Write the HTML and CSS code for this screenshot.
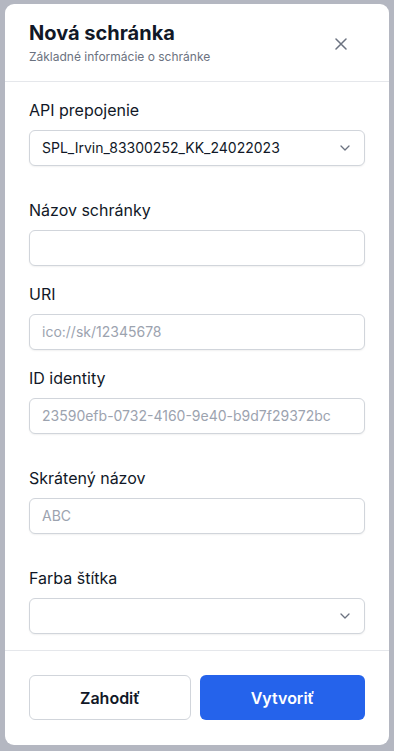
FILE: index.html
```html
<!DOCTYPE html>
<html>
<head>
  <meta charset="utf-8">
  <title>Nová schránka</title>
  <link rel="stylesheet" href="styles.css">
</head>
<body>
  <div class="backdrop">
    <div class="modal">
      <div class="modal-header">
        <div>
          <h2 class="modal-title">Nová schránka</h2>
          <p class="modal-subtitle">Základné informácie o schránke</p>
        </div>
        <button class="close-btn" aria-label="Zavrieť">
          <svg width="12" height="12" viewBox="0 0 12 12"><path d="M1 1L11 11M11 1L1 11" stroke="currentColor" stroke-width="1.5" stroke-linecap="round"/></svg>
        </button>
      </div>

      <div class="modal-body">
        <div class="field field-spaced">
          <label class="field-label">API prepojenie</label>
          <div class="select">
            <span>SPL_Irvin_83300252_KK_24022023</span>
            <svg class="chevron" width="10" height="6" viewBox="0 0 10 6"><path d="M1 1L5 5L9 1" fill="none" stroke="currentColor" stroke-width="1.3" stroke-linecap="round" stroke-linejoin="round"/></svg>
          </div>
        </div>

        <div class="field">
          <label class="field-label">Názov schránky</label>
          <div class="input"></div>
        </div>

        <div class="field">
          <label class="field-label">URI</label>
          <div class="input placeholder">ico://sk/12345678</div>
        </div>

        <div class="field field-spaced">
          <label class="field-label">ID identity</label>
          <div class="input placeholder">23590efb-0732-4160-9e40-b9d7f29372bc</div>
        </div>

        <div class="field field-spaced">
          <label class="field-label">Skrátený názov</label>
          <div class="input placeholder">ABC</div>
        </div>

        <div class="field">
          <label class="field-label">Farba štítka</label>
          <div class="select">
            <span></span>
            <svg class="chevron" width="10" height="6" viewBox="0 0 10 6"><path d="M1 1L5 5L9 1" fill="none" stroke="currentColor" stroke-width="1.3" stroke-linecap="round" stroke-linejoin="round"/></svg>
          </div>
        </div>
      </div>

      <div class="modal-footer">
        <button class="btn btn-secondary">Zahodiť</button>
        <button class="btn btn-primary">Vytvoriť</button>
      </div>
    </div>
  </div>
</body>
</html>
```

FILE: styles.css
```css
* {
  box-sizing: border-box;
}

body {
  margin: 0;
  padding: 0;
  font-family: 'Inter', 'Noto Sans', sans-serif;
  color: #111827;
  background: #b4b7c1;
}

.backdrop {
  min-height: 751px;
  padding: 4px 5px 6px;
  display: flex;
  flex-direction: column;
}

.modal {
  background: #ffffff;
  border-radius: 9px;
  display: flex;
  flex-direction: column;
  flex-grow: 1;
}

.modal-header {
  display: flex;
  justify-content: space-between;
  align-items: center;
  padding: 15px 24px 16px;
  border-bottom: 1px solid #e5e7eb;
}

.modal-title {
  margin: 0;
  font-size: 20px;
  line-height: 28px;
  font-weight: 700;
  color: #111827;
}

.modal-subtitle {
  margin: 2px 0 0;
  font-size: 12px;
  line-height: 16px;
  color: #6b7280;
}

.close-btn {
  border: none;
  background: none;
  padding: 0;
  margin-right: 18px;
  margin-top: 4px;
  color: #6b7280;
  display: flex;
  cursor: pointer;
}

.modal-body {
  padding: 16px 24px 16px;
  display: flex;
  flex-direction: column;
  gap: 16px;
  border-bottom: 1px solid #e5e7eb;
}

.field {
  display: flex;
  flex-direction: column;
}

.field-spaced {
  padding-bottom: 16px;
}

.field-label {
  font-size: 16px;
  line-height: 24px;
  color: #111827;
  margin-bottom: 8px;
}

.input,
.select {
  height: 36px;
  border: 1px solid #d1d5db;
  border-radius: 6px;
  box-shadow: 0 1px 2px rgba(0, 0, 0, 0.06);
  padding: 0 12px;
  font-size: 14px;
  line-height: 34px;
  color: #111827;
  background: #ffffff;
}

.placeholder {
  color: #9ca3af;
}

.select {
  display: flex;
  justify-content: space-between;
  align-items: center;
}

.chevron {
  color: #6b7280;
  margin-right: 2px;
}

.modal-footer {
  display: flex;
  gap: 9px;
  padding: 24px 24px 25px;
  margin-top: auto;
}

.btn {
  height: 45px;
  border-radius: 6px;
  font-family: 'Inter', 'Noto Sans', sans-serif;
  font-size: 16px;
  font-weight: 600;
  cursor: pointer;
}

.btn-secondary {
  width: 162px;
  background: #ffffff;
  border: 1px solid #d1d5db;
  color: #111827;
}

.btn-primary {
  flex: 1;
  background: #2563eb;
  border: none;
  color: #ffffff;
}
```
